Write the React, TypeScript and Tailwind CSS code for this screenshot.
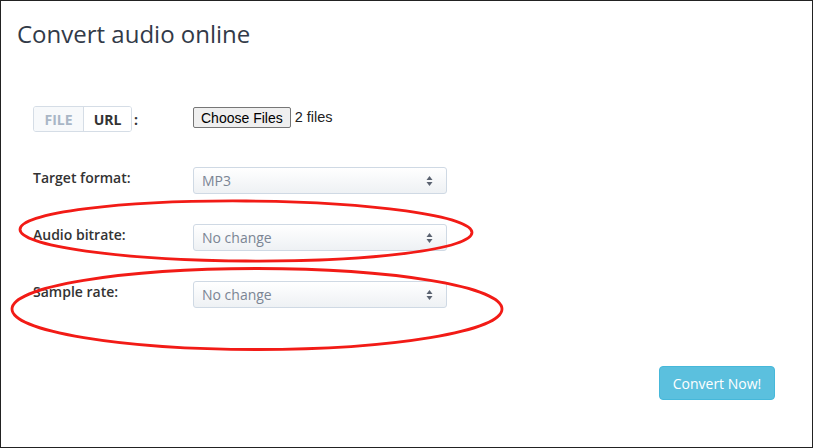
import React from 'react';

const font = { fontFamily: '"Open Sans", "Noto Sans", sans-serif' };

const SelectBox: React.FC<{ value: string }> = ({ value }) => (
  <div className="flex h-[27px] w-[254px] items-center justify-between rounded-[3px] border border-[#cfd9e4] bg-gradient-to-b from-white to-[#eef1f4] pl-[8px] pr-[13px] text-[14px] text-[#7b8594]">
    <span>{value}</span>
    <svg width="7" height="12" viewBox="0 0 7 12">
      <path d="M3.5 1 L6.5 5 L0.5 5 Z" fill="#5a6270" />
      <path d="M3.5 11 L6.5 7 L0.5 7 Z" fill="#5a6270" />
    </svg>
  </div>
);

const FormRow: React.FC<{ label: string; children: React.ReactNode }> = ({ label, children }) => (
  <div className="flex items-start">
    <label className="w-[160px] shrink-0 text-[14px] font-semibold text-[#333]">{label}</label>
    {children}
  </div>
);

const App: React.FC = () => {
  return (
    <div className="relative h-[448px] w-[813px] overflow-hidden border border-[#222] bg-white" style={font}>
      <h1 className="pl-[16px] pt-[17px] text-[24px] leading-[32px] text-[#323a48]">Convert audio online</h1>

      <div className="pl-[32px] pt-[56px]">
        {/* source */}
        <div className="flex items-center">
          <div className="flex w-[160px] shrink-0 items-center">
            <div className="flex h-[26px] overflow-hidden rounded-[3px] border border-[#d5dde6] text-[14px] font-bold">
              <span className="flex w-[49px] items-center justify-center bg-[#f7f9fb] text-[#a9b6c6]">FILE</span>
              <span className="flex w-[48px] items-center justify-center border-l border-[#d5dde6] bg-white text-[#333]">URL</span>
            </div>
            <span className="ml-[2px] text-[14px] font-bold text-[#333]">:</span>
          </div>
          <div className="-mt-[3px] flex items-center" style={{ fontFamily: '"Liberation Sans", Arial, sans-serif' }}>
            <button className="h-[21px] rounded-[2px] border border-[#767676] bg-[#efefef] px-[7px] text-[14px] leading-none text-black">
              Choose Files
            </button>
            <span className="ml-[4px] text-[14.5px] text-[#222]">2 files</span>
          </div>
        </div>

        <div className="mt-[35px] flex flex-col gap-[30px]">
          <FormRow label="Target format:">
            <SelectBox value="MP3" />
          </FormRow>
          <FormRow label="Audio bitrate:">
            <SelectBox value="No change" />
          </FormRow>
          <FormRow label="Sample rate:">
            <SelectBox value="No change" />
          </FormRow>
        </div>
      </div>

      <div className="flex justify-end pr-[37px] pt-[58px]">
        <button className="h-[34px] w-[116px] rounded-[4px] border border-[#46b8da] bg-[#5bc0de] text-[14px] text-white">
          Convert Now!
        </button>
      </div>

      {/* annotations */}
      <svg className="pointer-events-none absolute left-0 top-0" width="813" height="448">
        <ellipse cx="245" cy="230" rx="226" ry="30" fill="none" stroke="#f21b16" strokeWidth="2.8" transform="rotate(0.4 245 230)" />
        <ellipse cx="256" cy="308" rx="245" ry="40.5" fill="none" stroke="#f21b16" strokeWidth="2.8" />
      </svg>
    </div>
  );
};

export default App;
